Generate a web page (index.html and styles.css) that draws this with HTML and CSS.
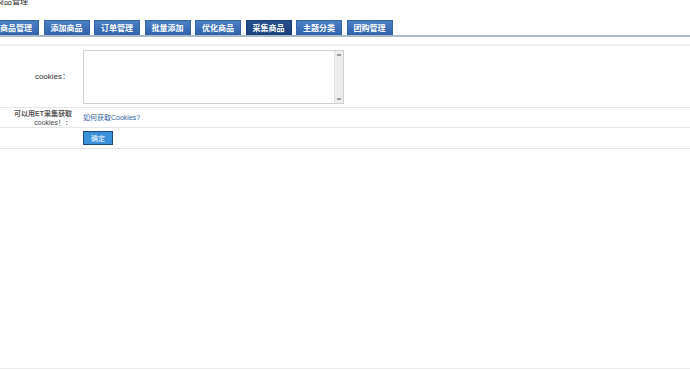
FILE: index.html
```html
<!DOCTYPE html>
<html>
<head>
	<meta charset="utf-8">
	<title>采集商品</title>
	<link rel="stylesheet" href="styles.css">
</head>
<body>
	<div class="page">
		<div class="top">
			<div class="title">商品管理</div>
			<div class="tabs">
				<a class="tab" href="#">商品管理</a>
				<a class="tab" href="#">添加商品</a>
				<a class="tab" href="#">订单管理</a>
				<a class="tab" href="#">批量添加</a>
				<a class="tab" href="#">优化商品</a>
				<a class="tab active" href="#">采集商品</a>
				<a class="tab" href="#">主题分类</a>
				<a class="tab" href="#">团购管理</a>
			</div>
		</div>
		<table class="form">
			<tr class="row-big">
				<th>cookies：</th>
				<td>
					<div class="area">
						<textarea class="cookies"></textarea>
						<div class="bar"><span class="arrow"></span><span class="arrow"></span></div>
					</div>
				</td>
			</tr>
			<tr class="row-help">
				<th class="two"><b>可以用ET采集获取</b><br>cookies！：</th>
				<td><a class="help" href="#">如何获取Cookies?</a></td>
			</tr>
			<tr class="row-btn">
				<th></th>
				<td><button class="ok">确定</button></td>
			</tr>
		</table>
	</div>
</body>
</html>
```

FILE: styles.css
```css
* {
	font-family: "Liberation Sans", "Noto Sans CJK SC", sans-serif;
}
body {
	margin: 0;
	background: #fff;
	overflow: hidden;
}
.page {
	display: flow-root;
	height: 369px;
	box-sizing: border-box;
	border-bottom: 1px solid #ececec;
}
.top {
	margin-left: -7px;
}
.title {
	margin-top: -3px;
	font-size: 8px;
	line-height: 10px;
	color: #222;
	padding-left: 3px;
}
.tabs {
	display: flex;
	gap: 4.5px;
	margin-top: 13px;
	border-bottom: 2px solid #a9bbc6;
}
.tab {
	width: 46px;
	height: 15px;
	line-height: 15px;
	text-align: center;
	font-size: 8px;
	font-weight: bold;
	color: #fff;
	text-decoration: none;
	background: linear-gradient(#4b80c6, #2f62ab);
	box-sizing: border-box;
	border: 1px solid #3465a8;
	border-bottom: none;
}
.tab.active {
	background: linear-gradient(#27518f, #173e79);
	border-color: #173e79;
}
.form {
	width: 100%;
	margin-top: 7px;
	border-collapse: collapse;
	border-top: 2px solid #efefef;
}
.form th, .form td {
	border-bottom: 1px solid #e6e6e6;
	font-size: 8px;
	line-height: 9px;
	color: #333;
	padding: 0;
}
.form th {
	width: 70px;
	padding-right: 8px;
	text-align: right;
	font-weight: normal;
}
.form td {
	padding-left: 5px;
}
.row-big td {
	padding-top: 4px;
	padding-bottom: 3px;
}
.row-help th, .row-help td {
	height: 19px;
}
.form th.two {
	font-size: 7px;
	color: #444;
	padding-right: 6px;
}
.form th.two b {
	color: #555;
}
.row-btn th, .row-btn td {
	height: 20px;
}
.area {
	display: flex;
	width: 261px;
	height: 54px;
	box-sizing: border-box;
	border: 1px solid #cfcfcf;
}
.cookies {
	flex: 1;
	border: none;
	resize: none;
	margin: 0;
	padding: 2px;
}
.bar {
	width: 8px;
	background: #ededed;
	border-left: 1px solid #e2e2e2;
	display: flex;
	flex-direction: column;
	justify-content: space-between;
	align-items: center;
	padding: 3px 0;
}
.arrow {
	width: 4px;
	height: 2px;
	background: #9a9a9a;
}
.help {
	font-size: 7px;
	color: #2f5f9e;
	text-decoration: none;
}
.ok {
	width: 30px;
	height: 14px;
	padding: 0;
	font-size: 7px;
	color: #fff;
	background: #3a90d9;
	border: 1px solid #1d4a82;
	display: block;
}
```
